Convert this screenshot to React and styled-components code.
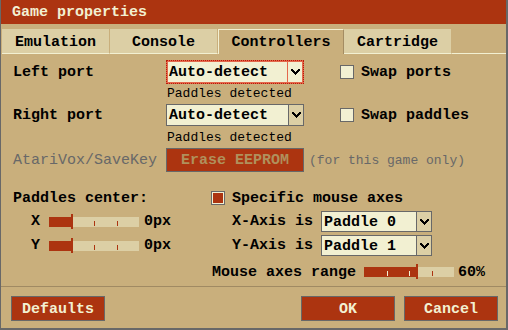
import React from "react";
import styled, { createGlobalStyle } from "styled-components";

const RED = "#ac3410";
const CREAM = "#f2f0d2";
const TAN = "#c9af7c";
const LIGHT_TAN = "#dccfa5";
const GRAY = "#686868";

const GlobalStyle = createGlobalStyle`
  html, body {
    margin: 0;
    padding: 0;
    background: ${TAN};
  }
  body {
    font-family: "Liberation Mono", "DejaVu Sans Mono", monospace;
  }
`;

const Dialog = styled.div`
  width: 508px;
  height: 330px;
  box-sizing: border-box;
  background: ${TAN};
  border-left: 1px solid ${GRAY};
  border-right: 2px solid ${GRAY};
  border-bottom: 2px solid ${GRAY};
  display: flex;
  flex-direction: column;
  overflow: hidden;
`;

const TitleBar = styled.div`
  height: 24px;
  box-sizing: border-box;
  padding: 2px 0 0 11px;
  line-height: 22px;
  background: ${RED};
  color: ${CREAM};
  font-weight: bold;
  font-size: 15px;
  white-space: pre;
`;

const TabBar = styled.div`
  margin-top: 5px;
  height: 25px;
  padding-left: 1px;
  display: flex;
  align-items: flex-end;
`;

const Tab = styled.div`
  box-sizing: border-box;
  width: ${(p) => p.$w}px;
  height: 25px;
  text-align: center;
  font-size: 15px;
  font-weight: bold;
  line-height: 18px;
  color: #000;
  white-space: pre;
  background: ${(p) => (p.$active ? TAN : LIGHT_TAN)};
  padding-top: ${(p) => (p.$active ? 4 : 5)}px;
  border-top: ${(p) => (p.$active ? `1px solid ${CREAM}` : "none")};
  border-left: ${(p) => (p.$active ? `1px solid ${CREAM}` : "none")};
  border-right: 1px solid ${(p) => (p.$active ? "#a48c62" : TAN)};
  border-bottom: ${(p) => (p.$active ? "none" : `1px solid ${CREAM}`)};
`;

const TabFill = styled.div`
  flex: 1;
  height: 1px;
  background: ${CREAM};
`;

const Body = styled.div`
  display: flex;
  flex-direction: column;
  padding-left: 12px;
`;

const Row = styled.div`
  display: flex;
  align-items: center;
  height: ${(p) => p.$h}px;
  margin-top: ${(p) => p.$mt}px;
`;

const Label = styled.div`
  box-sizing: border-box;
  width: ${(p) => (p.$w ? `${p.$w}px` : "auto")};
  flex-shrink: 0;
  font-size: 15px;
  font-weight: ${(p) => (p.$dim ? "normal" : "bold")};
  color: ${(p) => (p.$dim ? GRAY : "#000")};
  line-height: 20px;
  padding-top: ${(p) => p.$pt || 1}px;
  padding-left: ${(p) => p.$pl || 0}px;
  white-space: pre;
`;

const Hint = styled.div`
  font-size: 13px;
  line-height: 16px;
  color: ${(p) => (p.$dim ? GRAY : "#000")};
  margin-top: ${(p) => p.$mt || 0}px;
  margin-left: ${(p) => p.$ml || 0}px;
  padding-top: ${(p) => p.$pt || 0}px;
  white-space: pre;
`;

const SelectBox = styled.div`
  display: flex;
  flex-shrink: 0;
  box-sizing: border-box;
  width: ${(p) => p.$w}px;
  height: ${(p) => (p.$focused ? p.$h + 2 : p.$h)}px;
  border: 1px ${(p) => (p.$focused ? "dotted #b81c08" : `solid ${GRAY}`)};
  background: ${(p) => (p.$focused ? "#e4684c" : CREAM)};
  padding: ${(p) => (p.$focused ? 1 : 0)}px;
`;

const SelectValue = styled.div`
  flex: 1;
  background: ${CREAM};
  font-size: 15px;
  font-weight: bold;
  padding-left: ${(p) => (p.$focused ? 1 : 2)}px;
  display: flex;
  align-items: center;
  padding-top: 1px;
  white-space: pre;
`;

const ArrowBox = styled.div`
  width: 15px;
  box-sizing: border-box;
  display: flex;
  align-items: center;
  justify-content: center;
  background: ${(p) => (p.$focused ? CREAM : LIGHT_TAN)};
  border-left: 1px solid ${(p) => (p.$focused ? "#e4684c" : GRAY)};
`;

const Chevron = () => (
  <svg width="9" height="6" viewBox="0 0 9 6" shapeRendering="crispEdges">
    <path d="M0 0h2v1h1v1h1v1h1V2h1V1h1V0h2v2H8v1H7v1H6v1H5v1H4V5H3V4H2V3H1V2H0z" fill="#000" />
  </svg>
);

const Select = ({ value, width, height = 22, focused }) => (
  <SelectBox $w={width} $h={height} $focused={focused}>
    <SelectValue $focused={focused}>{value}</SelectValue>
    <ArrowBox $focused={focused}>
      <Chevron />
    </ArrowBox>
  </SelectBox>
);

const CheckBox = styled.div`
  width: 14px;
  height: 14px;
  box-sizing: border-box;
  flex-shrink: 0;
  border: 1px solid ${GRAY};
  background: ${CREAM};
  padding: 1px;
  margin-right: 7px;
  margin-left: ${(p) => p.$ml || 0}px;
`;

const CheckMark = styled.div`
  width: 100%;
  height: 100%;
  background: ${RED};
`;

const Button = styled.div`
  box-sizing: border-box;
  width: ${(p) => p.$w || 94}px;
  height: ${(p) => p.$h || 25}px;
  background: ${RED};
  border: 1px solid ${GRAY};
  color: ${(p) => (p.$disabled ? "#b0905c" : CREAM)};
  font-size: 15px;
  font-weight: bold;
  display: flex;
  align-items: center;
  justify-content: center;
  padding-top: 1px;
  white-space: pre;
  flex-shrink: 0;
`;

const Track = styled.div`
  position: relative;
  width: ${(p) => p.$w}px;
  height: 10px;
  flex-shrink: 0;
  background: ${LIGHT_TAN};
`;

const Fill = styled.div`
  position: absolute;
  left: 0;
  top: 0;
  bottom: 0;
  background: ${RED};
`;

const Tick = styled.div`
  position: absolute;
  bottom: 1px;
  width: 1px;
  height: 5px;
  background: ${(p) => (p.$on ? CREAM : RED)};
`;

const Handle = styled.div`
  position: absolute;
  top: -3px;
  width: 2px;
  height: 15px;
  background: ${RED};
`;

const Slider = ({ value, width = 90 }) => (
  <Track $w={width}>
    <Fill style={{ width: `${value}%` }} />
    {[25, 50, 75].map((t) => (
      <Tick key={t} $on={t < value} style={{ left: `${t}%` }} />
    ))}
    <Handle style={{ left: `calc(${value}% - 1px)` }} />
  </Track>
);

const LeftCell = styled.div`
  width: 198px;
  flex-shrink: 0;
  display: flex;
  align-items: center;
`;

const RightCell = styled.div`
  display: flex;
  align-items: center;
  padding-left: ${(p) => p.$pl || 0}px;
`;

const Separator = styled.div`
  height: 1px;
  margin-top: 4px;
  background: #a08a63;
`;

const Footer = styled.div`
  display: flex;
  margin-top: 9px;
  padding: 0 8px 0 10px;
  gap: 9px;
`;

const Spacer = styled.div`
  flex: 1;
`;

export default function App() {
  return (
    <>
      <GlobalStyle />
      <Dialog>
        <TitleBar>Game properties</TitleBar>
        <TabBar>
          <Tab $w={108}>Emulation</Tab>
          <Tab $w={108}>Console</Tab>
          <Tab $w={126} $active>
            Controllers
          </Tab>
          <Tab $w={108}>Cartridge</Tab>
          <TabFill />
        </TabBar>
        <Body>
          <Row $h={22} $mt={7}>
            <Label $w={153}>Left port</Label>
            <Select value="Auto-detect" width={138} focused />
            <CheckBox $ml={36} />
            <Label>Swap ports</Label>
          </Row>
          <Hint $mt={3} $ml={154}>Paddles detected</Hint>
          <Row $h={22} $mt={2}>
            <Label $w={153}>Right port</Label>
            <Select value="Auto-detect" width={138} />
            <CheckBox $ml={36} />
            <Label>Swap paddles</Label>
          </Row>
          <Hint $mt={4} $ml={154}>Paddles detected</Hint>
          <Row $h={24} $mt={2}>
            <Label $w={153} $dim $pt={2}>
              AtariVox/SaveKey
            </Label>
            <Button $w={138} $h={24} $disabled>
              Erase EEPROM
            </Button>
            <Hint $dim $ml={5} $pt={1}>
              (for this game only)
            </Hint>
          </Row>

          <Row $h={20} $mt={16}>
            <LeftCell>
              <Label>Paddles center:</Label>
            </LeftCell>
            <RightCell>
              <CheckBox>
                <CheckMark />
              </CheckBox>
              <Label>Specific mouse axes</Label>
            </RightCell>
          </Row>
          <Row $h={21} $mt={3}>
            <LeftCell>
              <Label $w={36} $pl={18}>X</Label>
              <Slider value={25} />
              <Label $pl={5}>0px</Label>
            </LeftCell>
            <RightCell $pl={21}>
              <Label $w={89}>X-Axis is</Label>
              <Select value="Paddle 0" width={111} height={21} />
            </RightCell>
          </Row>
          <Row $h={21} $mt={3}>
            <LeftCell>
              <Label $w={36} $pl={18}>Y</Label>
              <Slider value={25} />
              <Label $pl={5}>0px</Label>
            </LeftCell>
            <RightCell $pl={21}>
              <Label $w={89}>Y-Axis is</Label>
              <Select value="Paddle 1" width={111} height={21} />
            </RightCell>
          </Row>
          <Row $h={20} $mt={6}>
            <LeftCell />
            <RightCell $pl={1}>
              <Label $w={152}>Mouse axes range</Label>
              <Slider value={59} />
              <Label $pl={4}>60%</Label>
            </RightCell>
          </Row>
        </Body>
        <Separator />
        <Footer>
          <Button>Defaults</Button>
          <Spacer />
          <Button>OK</Button>
          <Button>Cancel</Button>
        </Footer>
      </Dialog>
    </>
  );
}
